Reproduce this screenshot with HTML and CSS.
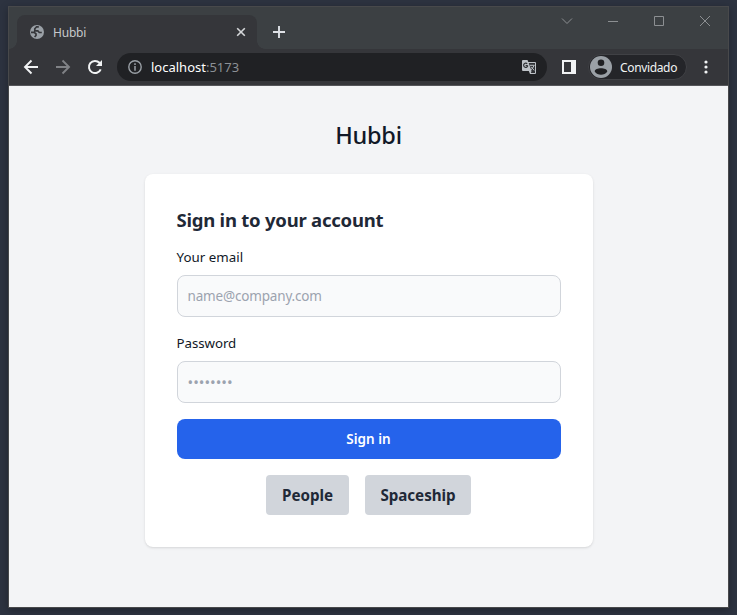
FILE: index.html
```html
<!DOCTYPE html>
<html lang="en">
<head>
<meta charset="utf-8">
<title>Hubbi</title>
<link rel="stylesheet" href="styles.css">
</head>
<body>
<div class="window">
  <header class="tabstrip">
    <div class="tab">
      <svg class="globe" width="16" height="16" viewBox="0 0 16 16"><circle cx="8" cy="8" r="7" fill="#9aa0a6"/><path d="M9.800 2.800H7.600L5.800 4.800v2h3l1.500 1.700h2.500M2 8.300h3.200l1.800 1.500v1.700L5.600 13" fill="none" stroke="#35363a" stroke-width="1.700"/></svg>
      <span class="tab-title">Hubbi</span>
      <svg class="tab-close" width="10" height="10" viewBox="0 0 10 10"><path d="m1.200 1.200 7.600 7.600m0-7.600L1.200 8.800" stroke="#d5d7da" stroke-width="1.600"/></svg>
    </div>
    <svg class="new-tab" width="12" height="12" viewBox="0 0 12 12"><path d="M6 0v12M0 6h12" stroke="#dee1e6" stroke-width="1.900"/></svg>
    <div class="controls">
      <svg width="12" height="12" viewBox="0 0 12 12"><path d="m1 3.500 5 5 5-5"/></svg>
      <svg width="12" height="12" viewBox="0 0 12 12"><path d="M1 6.500h10"/></svg>
      <svg width="12" height="12" viewBox="0 0 12 12"><path d="M1.500 1.500h9v9h-9z"/></svg>
      <svg width="12" height="12" viewBox="0 0 12 12"><path d="m1 1 10 10m0-10L1 11"/></svg>
    </div>
  </header>
  <nav class="toolbar">
    <svg class="nav-icon" width="16" height="16" viewBox="0 0 16 16"><path d="M15 8H2m6.500-6.500L2 8l6.500 6.500" fill="none" stroke="#f1f3f4" stroke-width="1.900"/></svg>
    <svg class="nav-icon" width="16" height="16" viewBox="0 0 16 16"><path d="M1 8h13M7.500 1.500 14 8l-6.500 6.500" fill="none" stroke="#808286" stroke-width="1.900"/></svg>
    <svg class="nav-icon" width="16" height="16" viewBox="0 0 16 16"><path d="M13.700 10.300A6.100 6.100 0 1 1 12.500 3.800L14 5.400" fill="none" stroke="#f1f3f4" stroke-width="2"/><path d="M15 1v6H9z" fill="#f1f3f4"/></svg>
    <div class="address">
      <svg width="14" height="14" viewBox="0 0 14 14"><circle cx="7" cy="7" r="6.200" fill="none" stroke="#9aa0a6" stroke-width="1.400"/><path d="M7 3.300v1.600M7 6v4.700" stroke="#9aa0a6" stroke-width="1.500"/></svg>
      <span class="url"><b>localhost</b>:5173</span>
      <svg class="translate" width="14" height="14" viewBox="0 0 14 14"><path d="M0 1q0-1 1-1h4.500l.8 2H13q1 0 1 1v10q0 1-1 1H8l-1.200-3H1q-1 0-1-1z" fill="#bdc1c6"/><path d="M6.700 3h6.300v10H8.900L9.500 11z" fill="#303236"/><path d="M5.800 5.500H3.600M5.200 3.800A2.100 2.100 0 1 0 5.800 5.700" fill="none" stroke="#303236" stroke-width="1.200"/><path d="M8 5.300h4.500M12 5.500q-1 3-3.300 4.500M9.200 6.800l3 3.600" fill="none" stroke="#bdc1c6"/></svg>
    </div>
    <svg class="panel" width="14" height="14" viewBox="0 0 14 14"><path d="M0 0h14v14H0zM2 2v10h7V2z" fill="#f1f3f4" fill-rule="evenodd"/></svg>
    <div class="profile">
      <svg width="22" height="22" viewBox="0 0 22 22"><circle cx="11" cy="11" r="11" fill="#9aa0a6"/><circle cx="11" cy="6.800" r="3.300" fill="#202124"/><path d="M4.700 15.500c0-4.300 12.600-4.300 12.600 0-2.800 4.300-9.800 4.300-12.600 0z" fill="#202124"/></svg>
      <span>Convidado</span>
    </div>
    <svg class="more" width="4" height="14" viewBox="0 0 4 14" fill="#f1f3f4"><circle cx="2" cy="2" r="1.600"/><circle cx="2" cy="7" r="1.600"/><circle cx="2" cy="12" r="1.600"/></svg>
  </nav>
  <main class="page">
    <div class="brand">Hubbi</div>
    <section class="card">
      <h1>Sign in to your account</h1>
      <form>
        <label for="email">Your email</label>
        <div class="field"><input id="email" type="email" placeholder="name@company.com"></div>
        <label class="password-label" for="password">Password</label>
        <div class="field"><input id="password" type="password" placeholder="••••••••"></div>
        <button class="submit" type="button">Sign in</button>
      </form>
      <div class="links">
        <button type="button">People</button>
        <button class="spaceship" type="button">Spaceship</button>
      </div>
    </section>
  </main>
</div>
</body>
</html>
```
FILE: styles.css
```css
* { box-sizing: border-box; }
body {
  margin: 0;
  height: 615px;
  padding: 6px 8px 7px;
  overflow: hidden;
  background: #2d3340;
  font-family: "Noto Sans", "Open Sans", sans-serif;
}
svg { display: block; flex: none; }
button, input { font-family: inherit; }
.window {
  height: 602px;
  border: 1px solid #48494b;
  background: #f3f4f6;
  box-shadow: 0 2px 8px rgba(0, 0, 0, .3);
}
.tabstrip {
  display: flex;
  height: 42px;
  padding: 8px 17px 0 8px;
  background: #3c4043;
}
.tab {
  position: relative;
  display: flex;
  align-items: center;
  width: 240px;
  height: 34px;
  padding: 0 11px 0 12px;
  border-radius: 8px 8px 0 0;
  background: #35363a;
}
.tab::before, .tab::after {
  content: "";
  position: absolute;
  bottom: 0;
  width: 8px;
  height: 8px;
}
.tab::before { left: -8px; background: radial-gradient(circle at 0 0, transparent 7.5px, #35363a 8px); }
.tab::after { right: -8px; background: radial-gradient(circle at 100% 0, transparent 7.5px, #35363a 8px); }
.tab-title { margin-left: 8px; font-size: 12px; letter-spacing: -.2px; color: #c6c8cb; }
.tab-close { margin-left: auto; }
.new-tab { margin: 11px 0 0 16px; }
.controls { display: flex; gap: 34px; margin-left: auto; }
.controls svg { fill: none; stroke: #8c8f92; stroke-width: 1; }
.toolbar {
  display: flex;
  align-items: center;
  height: 37px;
  padding-left: 14px;
  border-bottom: 1px solid #55565a;
  background: #35363a;
}
.nav-icon { margin-right: 16px; }
.address {
  display: flex;
  align-items: center;
  width: 430px;
  height: 28px;
  margin-left: -2px;
  padding: 0 11px;
  border-radius: 14px;
  background: #202124;
}
.url { margin-left: 9px; font-size: 13px; color: #8c9095; }
.url b { font-weight: 400; color: #fff; }
.translate { margin-left: auto; }
.panel { margin-left: 15px; }
.profile {
  display: flex;
  align-items: center;
  width: 99px;
  height: 26px;
  margin-left: 12px;
  padding-left: 1px;
  border: 1px solid #404145;
  border-radius: 13px;
  background: #242529;
  font-size: 12px;
  letter-spacing: -.35px;
  color: #f1f3f4;
}
.profile span { margin-left: 8px; }
.more { margin-left: 17px; }
.page {
  display: flex;
  flex-direction: column;
  align-items: center;
  padding-top: 34px;
}
.brand {
  height: 30px;
  margin-bottom: 24px;
  line-height: 30px;
  font-size: 23.500px;
  font-weight: 500;
  letter-spacing: -.25px;
  color: #111827;
}
.card {
  width: 448px;
  padding: 33px 32px 32px;
  border-radius: 8px;
  background: #fff;
  box-shadow: 0 1px 3px rgba(0, 0, 0, .1), 0 1px 2px -1px rgba(0, 0, 0, .1);
}
h1 {
  margin: 0 0 15px;
  font-size: 18.500px;
  line-height: 25px;
  font-weight: 700;
  letter-spacing: -.23px;
  color: #1f2937;
}
label {
  display: block;
  margin-bottom: 8px;
  font-size: 13.300px;
  line-height: 20px;
  letter-spacing: .05px;
  color: #111827;
}
.password-label { letter-spacing: -.05px; }
.field { margin-bottom: 16px; }
input {
  display: block;
  width: 100%;
  height: 42px;
  padding: 0 10px;
  border: 1px solid #d1d5db;
  border-radius: 8px;
  background: #f9fafb;
  font-size: 13.500px;
}
input::placeholder { color: #9ca3af; opacity: 1; letter-spacing: -.17px; }
#password { font-size: 15px; }
#password::placeholder { letter-spacing: 0; }
.submit {
  display: block;
  width: 100%;
  height: 40px;
  padding: 0;
  border: 0;
  border-radius: 8px;
  background: #2563eb;
  font-size: 13.500px;
  font-weight: 600;
  color: #fff;
}
.links { display: flex; justify-content: center; gap: 16px; margin-top: 16px; }
.links button {
  width: 83px;
  height: 40px;
  padding: 0;
  border: 0;
  border-radius: 4px;
  background: #d1d5db;
  font-size: 15.200px;
  font-weight: 700;
  letter-spacing: -.05px;
  color: #1f2937;
}
.links .spaceship { width: 106px; }
```
